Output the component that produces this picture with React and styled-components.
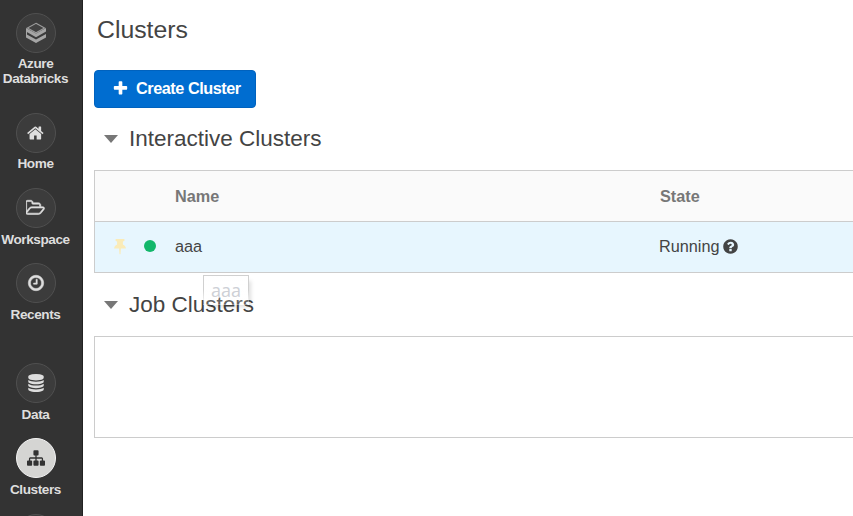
import React from 'react';
import styled, { createGlobalStyle } from 'styled-components';

const GlobalStyle = createGlobalStyle`
  * { box-sizing: border-box; }
  body { margin: 0; background: #fff; overflow: hidden; font-family: "Liberation Sans", Arial, sans-serif; }
`;

const ICONS = {
  home: 'M1408 992v480q0 26-19 45t-45 19h-384v-384h-256v384h-384q-26 0-45-19t-19-45v-480q0-1 .5-3t.5-3l575-474 575 474q1 2 1 6zm223-69l-62 74q-8 9-21 11h-3q-13 0-21-7l-692-577-692 577q-12 8-24 7-13-2-21-11l-62-74q-8-10-7-23.5t11-21.5l719-599q32-26 76-26t76 26l244 204v-195q0-14 9-23t23-9h192q14 0 23 9t9 23v408l219 182q10 8 11 21.5t-7 23.5z',
  folder: 'M1717 931q0-35-53-35h-1088q-40 0-85.5 21.5t-71.5 52.5l-294 363q-18 24-18 40 0 35 53 35h1088q40 0 86-22t71-53l294-363q18-22 18-39zm-1141-163h768v-160q0-40-28-68t-68-28h-576q-40 0-68-28t-28-68v-64q0-40-28-68t-68-28h-320q-40 0-68 28t-28 68v853l256-315q44-53 116-87.5t140-34.5zm1269 163q0 62-46 120l-295 363q-43 53-116 87.5t-140 34.5h-1088q-92 0-158-66t-66-158v-960q0-92 66-158t158-66h320q92 0 158 66t66 158v32h544q92 0 158 66t66 158v160h192q54 0 99 24.5t67 70.5q15 32 15 68z',
  clock: 'M1024 544v448q0 14-9 23t-23 9h-320q-14 0-23-9t-9-23v-64q0-14 9-23t23-9h224v-352q0-14 9-23t23-9h64q14 0 23 9t9 23zm416 352q0-148-73-273t-198-198-273-73-273 73-198 198-73 273 73 273 198 198 273 73 273-73 198-198 73-273zm224 0q0 209-103 385.5t-279.5 279.5-385.5 103-385.5-103-279.5-279.5-103-385.5 103-385.5 279.5-279.5 385.5-103 385.5 103 279.5 279.5 103 385.5z',
  database: 'M896 768q237 0 443-43t325-127v170q0 69-103 128t-280 93.5-385 34.5-385-34.5-280-93.5-103-128v-170q119 84 325 127t443 43zm0 768q237 0 443-43t325-127v170q0 69-103 128t-280 93.5-385 34.5-385-34.5-280-93.5-103-128v-170q119 84 325 127t443 43zm0-384q237 0 443-43t325-127v170q0 69-103 128t-280 93.5-385 34.5-385-34.5-280-93.5-103-128v-170q119 84 325 127t443 43zm0-1152q208 0 385 34.5t280 93.5 103 128v128q0 69-103 128t-280 93.5-385 34.5-385-34.5-280-93.5-103-128v-128q0-69 103-128t280-93.5 385-34.5z',
  sitemap: 'M1792 1248v320q0 40-28 68t-68 28h-320q-40 0-68-28t-28-68v-320q0-40 28-68t68-28h96v-192h-512v192h96q40 0 68 28t28 68v320q0 40-28 68t-68 28h-320q-40 0-68-28t-28-68v-320q0-40 28-68t68-28h96v-192h-512v192h96q40 0 68 28t28 68v320q0 40-28 68t-68 28h-320q-40 0-68-28t-28-68v-320q0-40 28-68t68-28h96v-192q0-52 38-90t90-38h512v-192h-96q-40 0-68-28t-28-68v-320q0-40 28-68t68-28h320q40 0 68 28t28 68v320q0 40-28 68t-68 28h-96v192h512q52 0 90 38t38 90v192h96q40 0 68 28t28 68z',
  plus: 'M1600 736v192q0 40-28 68t-68 28h-416v416q0 40-28 68t-68 28h-192q-40 0-68-28t-28-68v-416h-416q-40 0-68-28t-28-68v-192q0-40 28-68t68-28h416v-416q0-40 28-68t68-28h192q40 0 68 28t28 68v416h416q40 0 68 28t28 68z',
  question: 'M1024 1376v-192q0-14-9-23t-23-9h-192q-14 0-23 9t-9 23v192q0 14 9 23t23 9h192q14 0 23-9t9-23zm256-672q0-88-55.5-163t-138.5-116-170-41q-243 0-371 213-15 24 8 42l132 100q7 6 19 6 16 0 25-12 53-68 86-92 34-24 86-24 48 0 85.5 26t37.5 59q0 38-20 61t-68 45q-63 28-115.5 86.5t-52.5 125.5v36q0 14 9 23t23 9h192q14 0 23-9t9-23q0-19 21.5-49.5t54.5-49.5q32-18 49-28.5t46-35 44.5-48 28-60.5 12.5-81zm384 192q0 209-103 385.5t-279.5 279.5-385.5 103-385.5-103-279.5-279.5-103-385.5 103-385.5 279.5-279.5 385.5-103 385.5 103 279.5 279.5 103 385.5z',
};

const Glyph = styled.svg`
  display: block;
  flex: none;
  fill: currentColor;
  stroke: currentColor;
  stroke-width: ${(p) => p.$weight || 0};
`;

function Icon({ name, size, wide = 1792, weight }) {
  return (
    <Glyph $weight={weight} width={(size * wide) / 1792} height={size} viewBox={`0 0 ${wide} 1792`} aria-hidden="true">
      <path d={ICONS[name]} />
    </Glyph>
  );
}

function PinIcon() {
  return (
    <Glyph width="12" height="17" viewBox="0 0 12 17" aria-hidden="true">
      <path d="M1.6 1H10.4V2.9L8.9 3.4V6.6C10.6 7.3 11.7 8.6 11.9 10.4H6.9L6.5 16.2H5.5L5.1 10.4H.1C.3 8.6 1.4 7.3 3.1 6.6V3.4L1.6 2.9Z" />
    </Glyph>
  );
}

function DatabricksLogo() {
  return (
    <Glyph width="22" height="22" viewBox="0 0 22 22" aria-hidden="true">
      <path d="M11 1.3 19.6 6 11 10.8 2.4 6Z" fill="#414141" stroke="#9c9c9c" strokeWidth="1.1" />
      <path d="M1 6 11 11.5 21 6V9.6L11 15.2 1 9.6Z" fill="#a6a6a6" stroke="none" />
      <path d="M1 12 11 17.4 21 12V15.4L11 21 1 15.4Z" fill="#a6a6a6" stroke="none" />
      <path d="M1.5 9V13" stroke="#a6a6a6" strokeWidth="1" />
    </Glyph>
  );
}

const Page = styled.div`
  display: flex;
  height: 516px;
  overflow: hidden;
`;

const Sidebar = styled.nav`
  display: flex;
  flex-direction: column;
  flex: none;
  width: 83px;
  padding: 12.5px 11px 0 0;
  background: #333;
  border-right: 1px solid #222;
  overflow: hidden;
`;

const NavItem = styled.a`
  display: flex;
  flex-direction: column;
  align-items: center;
  flex: none;
  height: ${(p) => p.$height || 75.2}px;
  color: #dedede;
`;

const NavCircle = styled.span`
  display: flex;
  align-items: center;
  justify-content: center;
  flex: none;
  width: 40px;
  height: 40px;
  margin-left: 1px;
  border-radius: 50%;
  border: 1px solid ${(p) => (p.$active ? '#f4f4f4' : '#505050')};
  background: ${(p) => (p.$active ? '#d5d5d3' : '#3c3c3c')};
  color: ${(p) => (p.$active ? '#333' : '#dedede')};
`;

const NavLabel = styled.span`
  margin-top: 3.7px;
  text-align: center;
  white-space: pre;
  font-size: 13.6px;
  font-weight: 700;
  line-height: 15px;
  letter-spacing: -0.42px;
`;

const Main = styled.main`
  flex: 1;
  min-width: 0;
  padding-left: 11px;
  color: #444;
`;

const Title = styled.h1`
  margin: 0;
  padding: 16px 0 0 3px;
  height: 70px;
  font-size: 24.8px;
  font-weight: 400;
  line-height: 28px;
`;

const CreateButton = styled.button`
  display: flex;
  align-items: center;
  gap: 7px;
  width: 162px;
  height: 38px;
  padding: 0 0 2px 17px;
  border: 1px solid #0062be;
  border-radius: 4px;
  background: #006dd0;
  color: #fff;
  font: 700 16.25px "Liberation Sans", Arial, sans-serif;
  letter-spacing: -0.46px;
  white-space: nowrap;
`;

const SectionHeader = styled.h2`
  position: relative;
  display: flex;
  align-items: center;
  gap: 11px;
  height: ${(p) => p.$height}px;
  margin: 0;
  padding-left: 10px;
  font-size: 22.5px;
  font-weight: 400;
  white-space: nowrap;
`;

const Caret = styled.span`
  width: 0;
  height: 0;
  border: 7px solid transparent;
  border-top: 8px solid #777;
  border-bottom: 0;
`;

const Table = styled.div`
  border: 1px solid #ccc;
  border-right: 0;
`;

const Row = styled.div`
  display: grid;
  grid-template-columns: 80px 484px 1fr;
  align-items: center;
  font-size: 16.25px;
`;

const HeadRow = styled(Row)`
  grid-template-columns: 80px 485px 1fr;
  height: 51px;
  border-bottom: 1px solid #ccc;
  background: #fafafa;
  color: #777;
  font-weight: 700;
`;

const BodyRow = styled(Row)`
  height: 50px;
  padding-bottom: 1.5px;
  background: #e7f6fe;
  color: #444;
`;

const Markers = styled.span`
  display: flex;
  align-items: center;
  gap: 18px;
  padding-left: 19px;
  color: #faebb8;
`;

const StatusDot = styled.span`
  width: 12px;
  height: 12px;
  border-radius: 50%;
  background: #12b76a;
`;

const State = styled.span`
  display: flex;
  align-items: center;
  gap: 2px;
`;

const Tooltip = styled.span`
  position: absolute;
  left: 109px;
  top: 2px;
  width: 46px;
  height: 30px;
  padding-left: 7px;
  border: 1px solid #d4d4d4;
  border-image: linear-gradient(#d0d0d0 50%, rgba(208, 208, 208, 0)) 1;
  background: linear-gradient(rgba(255, 255, 255, 0.4), rgba(255, 255, 255, 0.15));
  box-shadow: 4px 4px 4px -2px rgba(0, 0, 0, 0.13);
  color: #cdd0d6;
  font: 18px/28px "Open Sans", sans-serif;
`;

const JobPanel = styled.div`
  height: 102px;
  border: 1px solid #ccc;
  border-right: 0;
`;

export default function App() {
  return (
    <Page>
      <GlobalStyle />
      <Sidebar>
        <NavItem $height={100.2}>
          <NavCircle><DatabricksLogo /></NavCircle>
          <NavLabel>{'Azure\nDatabricks'}</NavLabel>
        </NavItem>
        <NavItem>
          <NavCircle><Icon name="home" size={18} /></NavCircle>
          <NavLabel>Home</NavLabel>
        </NavItem>
        <NavItem>
          <NavCircle><Icon name="folder" size={18} wide={1920} weight={60} /></NavCircle>
          <NavLabel>Workspace</NavLabel>
        </NavItem>
        <NavItem $height={100.2}>
          <NavCircle><Icon name="clock" size={18} weight={50} /></NavCircle>
          <NavLabel>Recents</NavLabel>
        </NavItem>
        <NavItem>
          <NavCircle><Icon name="database" size={18} /></NavCircle>
          <NavLabel>Data</NavLabel>
        </NavItem>
        <NavItem>
          <NavCircle $active><Icon name="sitemap" size={18} /></NavCircle>
          <NavLabel>Clusters</NavLabel>
        </NavItem>
        <NavItem><NavCircle /></NavItem>
      </Sidebar>
      <Main>
        <Title>Clusters</Title>
        <CreateButton><Icon name="plus" size={17} />Create Cluster</CreateButton>
        <SectionHeader $height={62}><Caret />Interactive Clusters</SectionHeader>
        <Table>
          <HeadRow><span /><span>Name</span><span>State</span></HeadRow>
          <BodyRow>
            <Markers><PinIcon /><StatusDot /></Markers>
            <span>aaa</span>
            <State>Running<Icon name="question" size={17} /></State>
          </BodyRow>
        </Table>
        <SectionHeader $height={63}><Caret />Job Clusters<Tooltip>aaa</Tooltip></SectionHeader>
        <JobPanel />
      </Main>
    </Page>
  );
}
